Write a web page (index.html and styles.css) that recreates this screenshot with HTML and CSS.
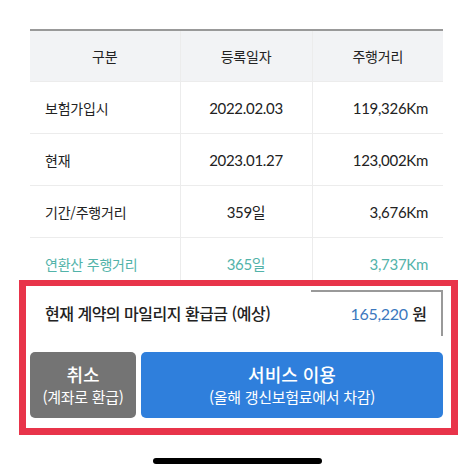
FILE: index.html
```html
<!DOCTYPE html>
<html lang="ko">
<head>
    <meta charset="UTF-8">
    <meta name="viewport" content="width=device-width, initial-scale=1.0">
    <title>마일리지 환급</title>
    <link rel="stylesheet" href="styles.css">
</head>
<body>

<div class="page">
    <div class="table-area">
        <table class="mileage">
            <colgroup>
                <col class="col-label">
                <col class="col-date">
                <col class="col-dist">
            </colgroup>
            <thead>
                <tr>
                    <th>구분</th>
                    <th>등록일자</th>
                    <th>주행거리</th>
                </tr>
            </thead>
            <tbody>
                <tr>
                    <td>보험가입시</td>
                    <td class="num">2022.02.03</td>
                    <td class="num">119,326Km</td>
                </tr>
                <tr>
                    <td>현재</td>
                    <td class="num">2023.01.27</td>
                    <td class="num">123,002Km</td>
                </tr>
                <tr>
                    <td>기간/주행거리</td>
                    <td class="num">359일</td>
                    <td class="num">3,676Km</td>
                </tr>
                <tr class="annual">
                    <td>연환산 주행거리</td>
                    <td class="num">365일</td>
                    <td class="num">3,737Km</td>
                </tr>
            </tbody>
        </table>
    </div>

    <div class="highlight">
        <div class="summary">
            <span class="summary-label">현재 계약의 마일리지 환급금 (예상)</span>
            <span class="summary-value"><span class="amount">165,220</span> 원</span>
        </div>
        <div class="actions">
            <button class="btn btn-cancel">
                <span class="btn-title">취소</span>
                <span class="btn-sub">(계좌로 환급)</span>
            </button>
            <button class="btn btn-use">
                <span class="btn-title">서비스 이용</span>
                <span class="btn-sub">(올해 갱신보험료에서 차감)</span>
            </button>
        </div>
    </div>

    <div class="home-bar"></div>
</div>

</body>
</html>
```

FILE: styles.css
```css
body {
    margin: 0;
    background: #ffffff;
    font-family: "Noto Sans CJK KR", "Noto Sans", sans-serif;
    color: #222;
}
.page {
    width: 474px;
    height: 474px;
    padding-top: 29px;
    box-sizing: border-box;
    overflow: hidden;
}

/* table */
.table-area {
    height: 251px;
    overflow: hidden;
    padding: 0 31px 0 30px;
}
.mileage {
    width: 413px;
    border-collapse: collapse;
    table-layout: fixed;
    border-top: 2px solid #999;
}
.col-label { width: 150px; }
.col-date { width: 132px; }
.col-dist { width: 131px; }
.mileage th,
.mileage td {
    height: 51px;
    padding: 0;
    border-bottom: 1px solid #ececec;
    border-left: 1px solid #ececec;
    font-size: 14px;
    letter-spacing: -0.2px;
    font-weight: 400;
}
.mileage th:first-child,
.mileage td:first-child {
    border-left: none;
}
.mileage th {
    background: #f2f3f5;
    text-align: center;
    height: 50px;
}
.mileage td:first-child {
    padding-left: 15px;
}
.mileage td:nth-child(2) {
    text-align: center;
}
.mileage td:nth-child(3) {
    text-align: right;
    padding-right: 15px;
}
.num {
    font-family: "Lato", "Noto Sans CJK KR", sans-serif;
    font-size: 15px !important;
    letter-spacing: -0.3px !important;
}
.annual td {
    color: #52b3a9;
}

/* highlighted block */
.highlight {
    margin: 0 16px 0 19px;
    border: 7px solid #e8344a;
    border-top-width: 6px;
    padding: 0 8px 10px 4px;
    background: #fff;
}
.summary {
    position: relative;
    display: flex;
    align-items: center;
    justify-content: space-between;
    height: 54px;
    padding: 0 16px 2px 15px;
    margin-bottom: 10px;
}
.summary::after {
    content: "";
    position: absolute;
    top: 4px;
    right: 0;
    width: 130px;
    height: 44px;
    border-top: 2px solid #999;
    border-right: 2px solid #999;
}
.summary-label {
    font-size: 16px;
    font-weight: 500;
    letter-spacing: -0.5px;
}
.summary-value {
    font-size: 16px;
    font-weight: 500;
}
.amount {
    font-family: "Lato", sans-serif;
    color: #3b78be;
    font-weight: 400;
    letter-spacing: -0.3px;
}

.actions {
    display: flex;
    gap: 5px;
}
.btn {
    display: flex;
    flex-direction: column;
    align-items: center;
    justify-content: center;
    height: 66px;
    border: none;
    border-radius: 5px;
    color: #fff;
    font-family: "Noto Sans CJK KR", sans-serif;
    padding: 0;
    cursor: pointer;
}
.btn-cancel {
    width: 106px;
    background: #747474;
}
.btn-use {
    flex: 1;
    background: #2f7fdc;
}
.btn-title {
    font-size: 18px;
    font-weight: 500;
    line-height: 24px;
}
.btn-sub {
    font-size: 15px;
    line-height: 22px;
    letter-spacing: -0.3px;
}

.home-bar {
    width: 169px;
    height: 6px;
    margin: 23px auto 0;
    border-radius: 3px;
    background: #000;
}
```
